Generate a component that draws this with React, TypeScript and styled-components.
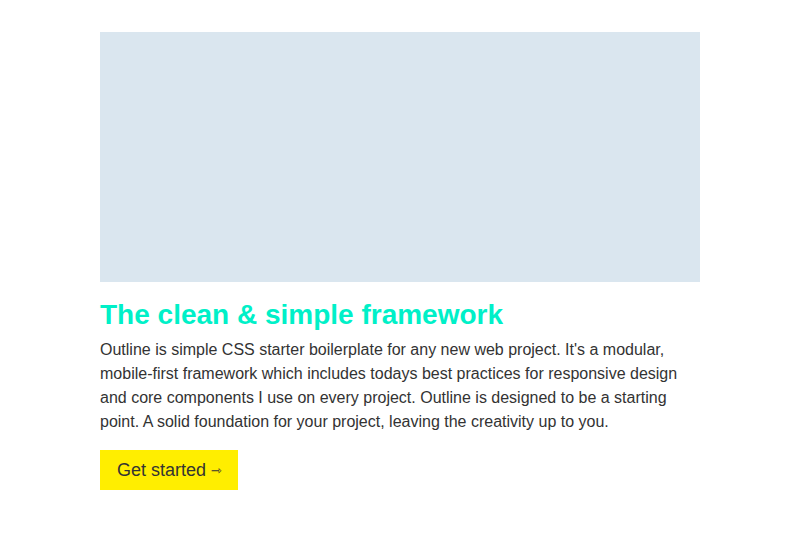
import React from "react";
import styled, { createGlobalStyle } from "styled-components";

const Global = createGlobalStyle`
  html, body { margin: 0; padding: 0; background: #fff; }
  body { font-family: "Liberation Sans", Arial, sans-serif; color: #333; }
`;

const Container = styled.main`
  width: 600px;
  margin: 32px auto 0;
  display: flex;
  flex-direction: column;
  align-items: flex-start;
`;

const Placeholder = styled.div`
  width: 600px;
  height: 250px;
  background: #dae6ef;
`;

const Heading = styled.h1`
  margin: 15px 0 0;
  font-size: 28px;
  line-height: 36px;
  font-weight: 700;
  color: #00f0c8;
  letter-spacing: 0;
`;

const Body = styled.p`
  margin: 5px 0 0;
  font-size: 16px;
  line-height: 24px;
  color: #333;
`;

const Button = styled.a`
  display: inline-flex;
  align-items: center;
  gap: 5px;
  margin-top: 16px;
  height: 40px;
  padding: 0 16px 0 17px;
  background: #ffee00;
  color: #333;
  font-size: 18px;
  text-decoration: none;
  box-sizing: border-box;
`;

const Arrow = styled.span`
  font-size: 13px;
  font-family: "DejaVu Sans", sans-serif;
`;

export default function App() {
  return (
    <>
      <Global />
      <Container>
        <Placeholder />
        <Heading>The clean &amp; simple framework</Heading>
        <Body>
          Outline is simple CSS starter boilerplate for any new web project. It's a modular,
          mobile-first framework which includes todays best practices for responsive design
          and core components I use on every project. Outline is designed to be a starting
          point. A solid foundation for your project, leaving the creativity up to you.
        </Body>
        <Button href="#">
          Get started <Arrow>⇾</Arrow>
        </Button>
      </Container>
    </>
  );
}
